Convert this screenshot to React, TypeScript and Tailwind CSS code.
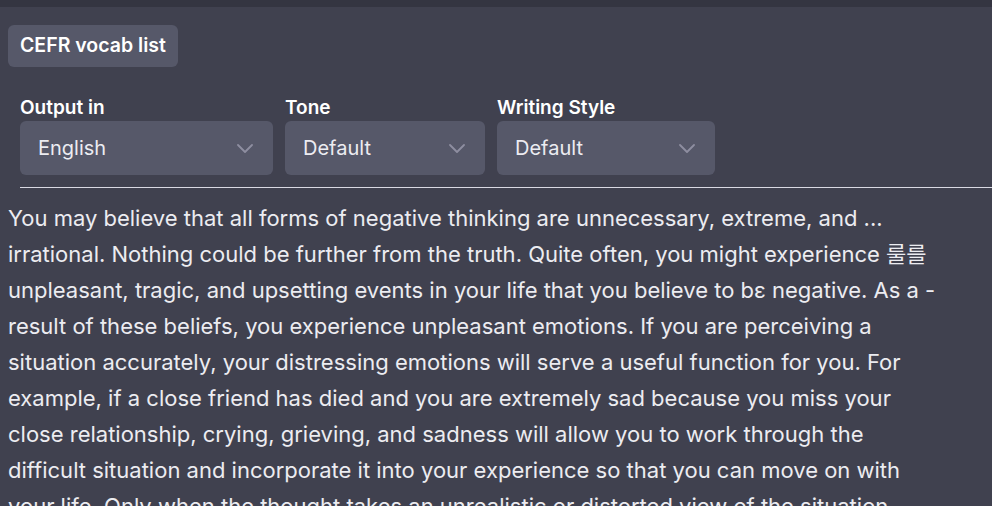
const lines = [
  'You may believe that all forms of negative thinking are unnecessary, extreme, and ...',
  'irrational. Nothing could be further from the truth. Quite often, you might experience 룰를',
  'unpleasant, tragic, and upsetting events in your life that you believe to bε negative. As a -',
  'result of these beliefs, you experience unpleasant emotions. If you are perceiving a',
  'situation accurately, your distressing emotions will serve a useful function for you. For',
  'example, if a close friend has died and you are extremely sad because you miss your',
  'close relationship, crying, grieving, and sadness will allow you to work through the',
  'difficult situation and incorporate it into your experience so that you can move on with',
  'your life. Only when the thought takes an unrealistic or distorted view of the situation',
];

function Chevron() {
  return (
    <svg width="16" height="9" viewBox="0 0 16 9" fill="none" className="text-[#8e8ea0]">
      <path d="M1 1l7 7 7-7" stroke="currentColor" strokeWidth="1.8" strokeLinecap="round" strokeLinejoin="round" />
    </svg>
  );
}

function Select({ label, value, width }: { label: string; value: string; width: string }) {
  return (
    <div className="flex flex-col">
      <span className="text-[19px] leading-[26px] font-semibold text-white">{label}</span>
      <div
        className={`${width} h-[54px] bg-[#565869] rounded-md flex items-center justify-between pl-[18px] pr-[20px]`}
      >
        <span className="text-[20px] text-[#ececf1]">{value}</span>
        <Chevron />
      </div>
    </div>
  );
}

export default function App() {
  return (
    <div
      className="w-[992px] h-[506px] overflow-hidden bg-[#40414f]"
      style={{ fontFamily: 'Inter, "Noto Sans CJK KR", sans-serif' }}
    >
      <div className="h-[7px] bg-[#343541]" />

      <div className="pl-[8px] pt-[18px]">
        <button className="h-[42px] px-[12px] rounded-md bg-[#565869] text-[19.5px] font-semibold text-white">
          CEFR vocab list
        </button>
      </div>

      <div className="pl-[20px] pt-[28px] flex gap-[12px]">
        <Select label="Output in" value="English" width="w-[253px]" />
        <Select label="Tone" value="Default" width="w-[200px]" />
        <Select label="Writing Style" value="Default" width="w-[218px]" />
      </div>

      <div className="ml-[20px] mt-[12px] h-px bg-[#d9d9e3]" />

      <div className="pl-[8px] pt-[12px] text-[22px] leading-[36px] text-[#ececf1]">
        {lines.map((line) => (
          <div key={line} className="whitespace-nowrap">
            {line}
          </div>
        ))}
      </div>
    </div>
  );
}
